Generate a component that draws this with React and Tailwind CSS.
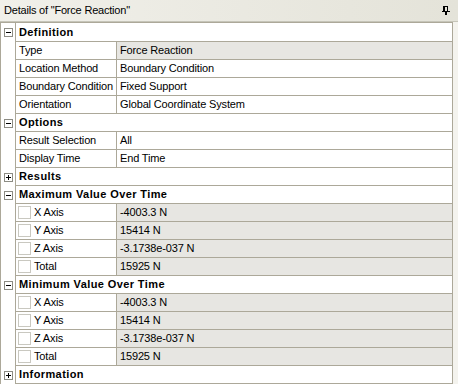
const sections = [
    {
        title: "Definition",
        open: true,
        rows: [
            { label: "Type", value: "Force Reaction", shaded: true },
            { label: "Location Method", value: "Boundary Condition" },
            { label: "Boundary Condition", value: "Fixed Support" },
            { label: "Orientation", value: "Global Coordinate System" },
        ],
    },
    {
        title: "Options",
        open: true,
        rows: [
            { label: "Result Selection", value: "All" },
            { label: "Display Time", value: "End Time" },
        ],
    },
    { title: "Results", open: false, rows: [] },
    {
        title: "Maximum Value Over Time",
        open: true,
        rows: [
            { label: "X Axis", value: "-4003.3 N", shaded: true, check: true },
            { label: "Y Axis", value: "15414 N", shaded: true, check: true },
            { label: "Z Axis", value: "-3.1738e-037 N", shaded: true, check: true },
            { label: "Total", value: "15925 N", shaded: true, check: true },
        ],
    },
    {
        title: "Minimum Value Over Time",
        open: true,
        rows: [
            { label: "X Axis", value: "-4003.3 N", shaded: true, check: true },
            { label: "Y Axis", value: "15414 N", shaded: true, check: true },
            { label: "Z Axis", value: "-3.1738e-037 N", shaded: true, check: true },
            { label: "Total", value: "15925 N", shaded: true, check: true },
        ],
    },
    { title: "Information", open: false, rows: [] },
];

const Expander = ({ open }) => (
    <div className="relative w-[9px] h-[9px] border border-[#8c8c84] bg-white">
        <div className="absolute left-[1px] top-[3px] w-[5px] h-[1px] bg-black" />
        {!open && <div className="absolute left-[3px] top-[1px] w-[1px] h-[5px] bg-black" />}
    </div>
);

const PinIcon = () => (
    <svg width="8" height="9" viewBox="0 0 8 9" shapeRendering="crispEdges">
        <rect x="1" y="0" width="2" height="5" fill="#000" />
        <rect x="3" y="0" width="3" height="1" fill="#000" />
        <rect x="5" y="0" width="1" height="5" fill="#000" />
        <rect x="0" y="5" width="8" height="1" fill="#000" />
        <rect x="3" y="6" width="2" height="3" fill="#000" />
    </svg>
);

const Row = ({ row }) => (
    <div className="flex h-[18px]">
        <div className="w-[15px] shrink-0 border-r border-[#aca899] bg-white" />
        <div className="w-[101px] shrink-0 flex items-center border-r border-b border-[#aca899] bg-white pl-[3px] overflow-hidden">
            {row.check && <div className="w-[13px] h-[13px] shrink-0 border border-[#c9c8c0] bg-white mr-[3px] ml-[-1px]" />}
            <span className="whitespace-nowrap">{row.label}</span>
        </div>
        <div
            className={
                "flex-1 flex items-center border-b border-[#aca899] pl-[3px] whitespace-nowrap " +
                (row.shaded ? "bg-[#e7e6e2]" : "bg-white")
            }
        >
            {row.value}
        </div>
    </div>
);

const App = () => {
    return (
        <div className="w-[458px] h-[384px] overflow-hidden bg-[#f4f3ee] text-[11px] leading-none tracking-[-0.15px] text-black font-['Liberation_Sans',Arial,sans-serif]">
            <div className="h-[22px] flex items-center justify-between pl-[4px] pr-[8px] border-b border-[#c6c5b9] bg-gradient-to-r from-[#f1f0ea] to-[#e4e3d9]">
                <span className="whitespace-nowrap tracking-[-0.2px]">Details of "Force Reaction"</span>
                <PinIcon />
            </div>

            <div className="w-[453px] border-t border-l border-r border-[#aca899] bg-white">
                {sections.map((section, i) => (
                    <div key={section.title}>
                        <div className={"flex " + (i === 0 ? "h-[19px]" : "h-[18px]")}>
                            <div className="w-[15px] shrink-0 flex items-center justify-center border-r border-[#aca899] pl-[1px]">
                                <Expander open={section.open} />
                            </div>
                            <div className="flex-1 flex items-center border-b border-[#aca899] pl-[3px] font-bold tracking-[0.4px] whitespace-nowrap">
                                {section.title}
                            </div>
                        </div>
                        {section.open && section.rows.map((row) => <Row key={row.label} row={row} />)}
                    </div>
                ))}
            </div>
        </div>
    );
};

export default App;
